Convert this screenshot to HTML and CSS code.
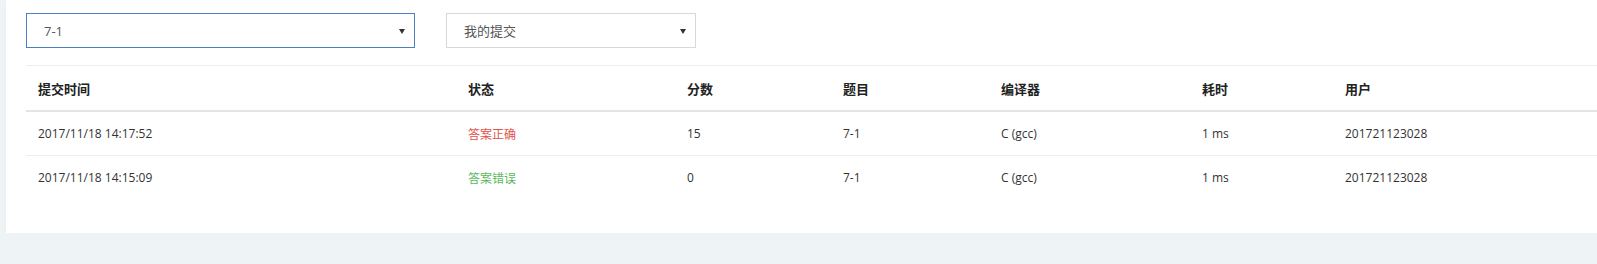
FILE: index.html
```html
<!DOCTYPE html>
<html lang="zh">
  <head>
    <meta charset="UTF-8" />
    <meta name="viewport" content="width=device-width, initial-scale=1.0" />
    <title>提交记录</title>
    <link rel="stylesheet" href="styles.css">
  </head>
  <body>
    <div class="card">
      <!-- 筛选 -->
      <div class="filters">
        <div class="select-box select-problem active">
          <select>
            <option>7-1</option>
          </select>
        </div>
        <div class="select-box select-scope">
          <select>
            <option>我的提交</option>
          </select>
        </div>
      </div>

      <!-- 提交列表 -->
      <table class="submissions">
        <colgroup>
          <col class="col-time" />
          <col class="col-status" />
          <col class="col-score" />
          <col class="col-problem" />
          <col class="col-compiler" />
          <col class="col-cost" />
          <col />
        </colgroup>
        <thead>
          <tr>
            <th>提交时间</th>
            <th>状态</th>
            <th>分数</th>
            <th>题目</th>
            <th>编译器</th>
            <th>耗时</th>
            <th>用户</th>
          </tr>
        </thead>
        <tbody>
          <tr>
            <td>2017/11/18 14:17:52</td>
            <td class="status-ok">答案正确</td>
            <td>15</td>
            <td>7-1</td>
            <td>C (gcc)</td>
            <td>1 ms</td>
            <td>201721123028</td>
          </tr>
          <tr>
            <td>2017/11/18 14:15:09</td>
            <td class="status-wrong">答案错误</td>
            <td>0</td>
            <td>7-1</td>
            <td>C (gcc)</td>
            <td>1 ms</td>
            <td>201721123028</td>
          </tr>
        </tbody>
      </table>
    </div>
  </body>
</html>
```
FILE: styles.css
```css
body {
  margin: 0;
  padding-left: 6px;
  background-color: #eef3f5;
  font-family: "Open Sans", "Noto Sans CJK SC", sans-serif;
  color: #333;
  overflow: hidden;
}
.card {
  background-color: #fff;
  height: 233px;
  box-sizing: border-box;
  padding: 13px 0 0 20px;
  box-shadow: 0 1px 2px rgba(0, 0, 0, 0.05);
}
.filters {
  display: flex;
  gap: 31px;
  margin-bottom: 17px;
}
.select-box {
  position: relative;
  height: 35px;
  box-sizing: border-box;
  border: 1px solid #d8d8d8;
}
.select-box.active {
  border-color: #4a7fc0;
}
.select-problem {
  width: 389px;
}
.select-scope {
  width: 250px;
}
.select-box select {
  appearance: none;
  -webkit-appearance: none;
  border: none;
  background: transparent;
  width: 100%;
  height: 100%;
  padding: 0 0 0 17px;
  font-family: inherit;
  font-size: 13px;
  color: #555;
  outline: none;
}
.select-box::after {
  content: '';
  position: absolute;
  right: 9px;
  top: 15px;
  border-left: 3px solid transparent;
  border-right: 3px solid transparent;
  border-top: 5px solid #333;
  pointer-events: none;
}
.submissions {
  border-collapse: collapse;
  table-layout: fixed;
  width: 100%;
  border-top: 1px solid #eee;
  font-size: 12px;
}
.col-time { width: 430px; }
.col-status { width: 219px; }
.col-score { width: 156px; }
.col-problem { width: 158px; }
.col-compiler { width: 201px; }
.col-cost { width: 143px; }
.submissions th,
.submissions td {
  text-align: left;
  padding: 0 12px;
}
.submissions th {
  height: 44px;
  font-size: 13px;
  font-weight: bold;
  color: #222;
  border-bottom: 2px solid #e4e4e4;
}
.submissions td {
  height: 43px;
}
.submissions tbody tr:first-child td {
  border-bottom: 1px solid #eee;
}
.status-ok {
  color: #e0534a;
}
.status-wrong {
  color: #5cb85c;
}
```
